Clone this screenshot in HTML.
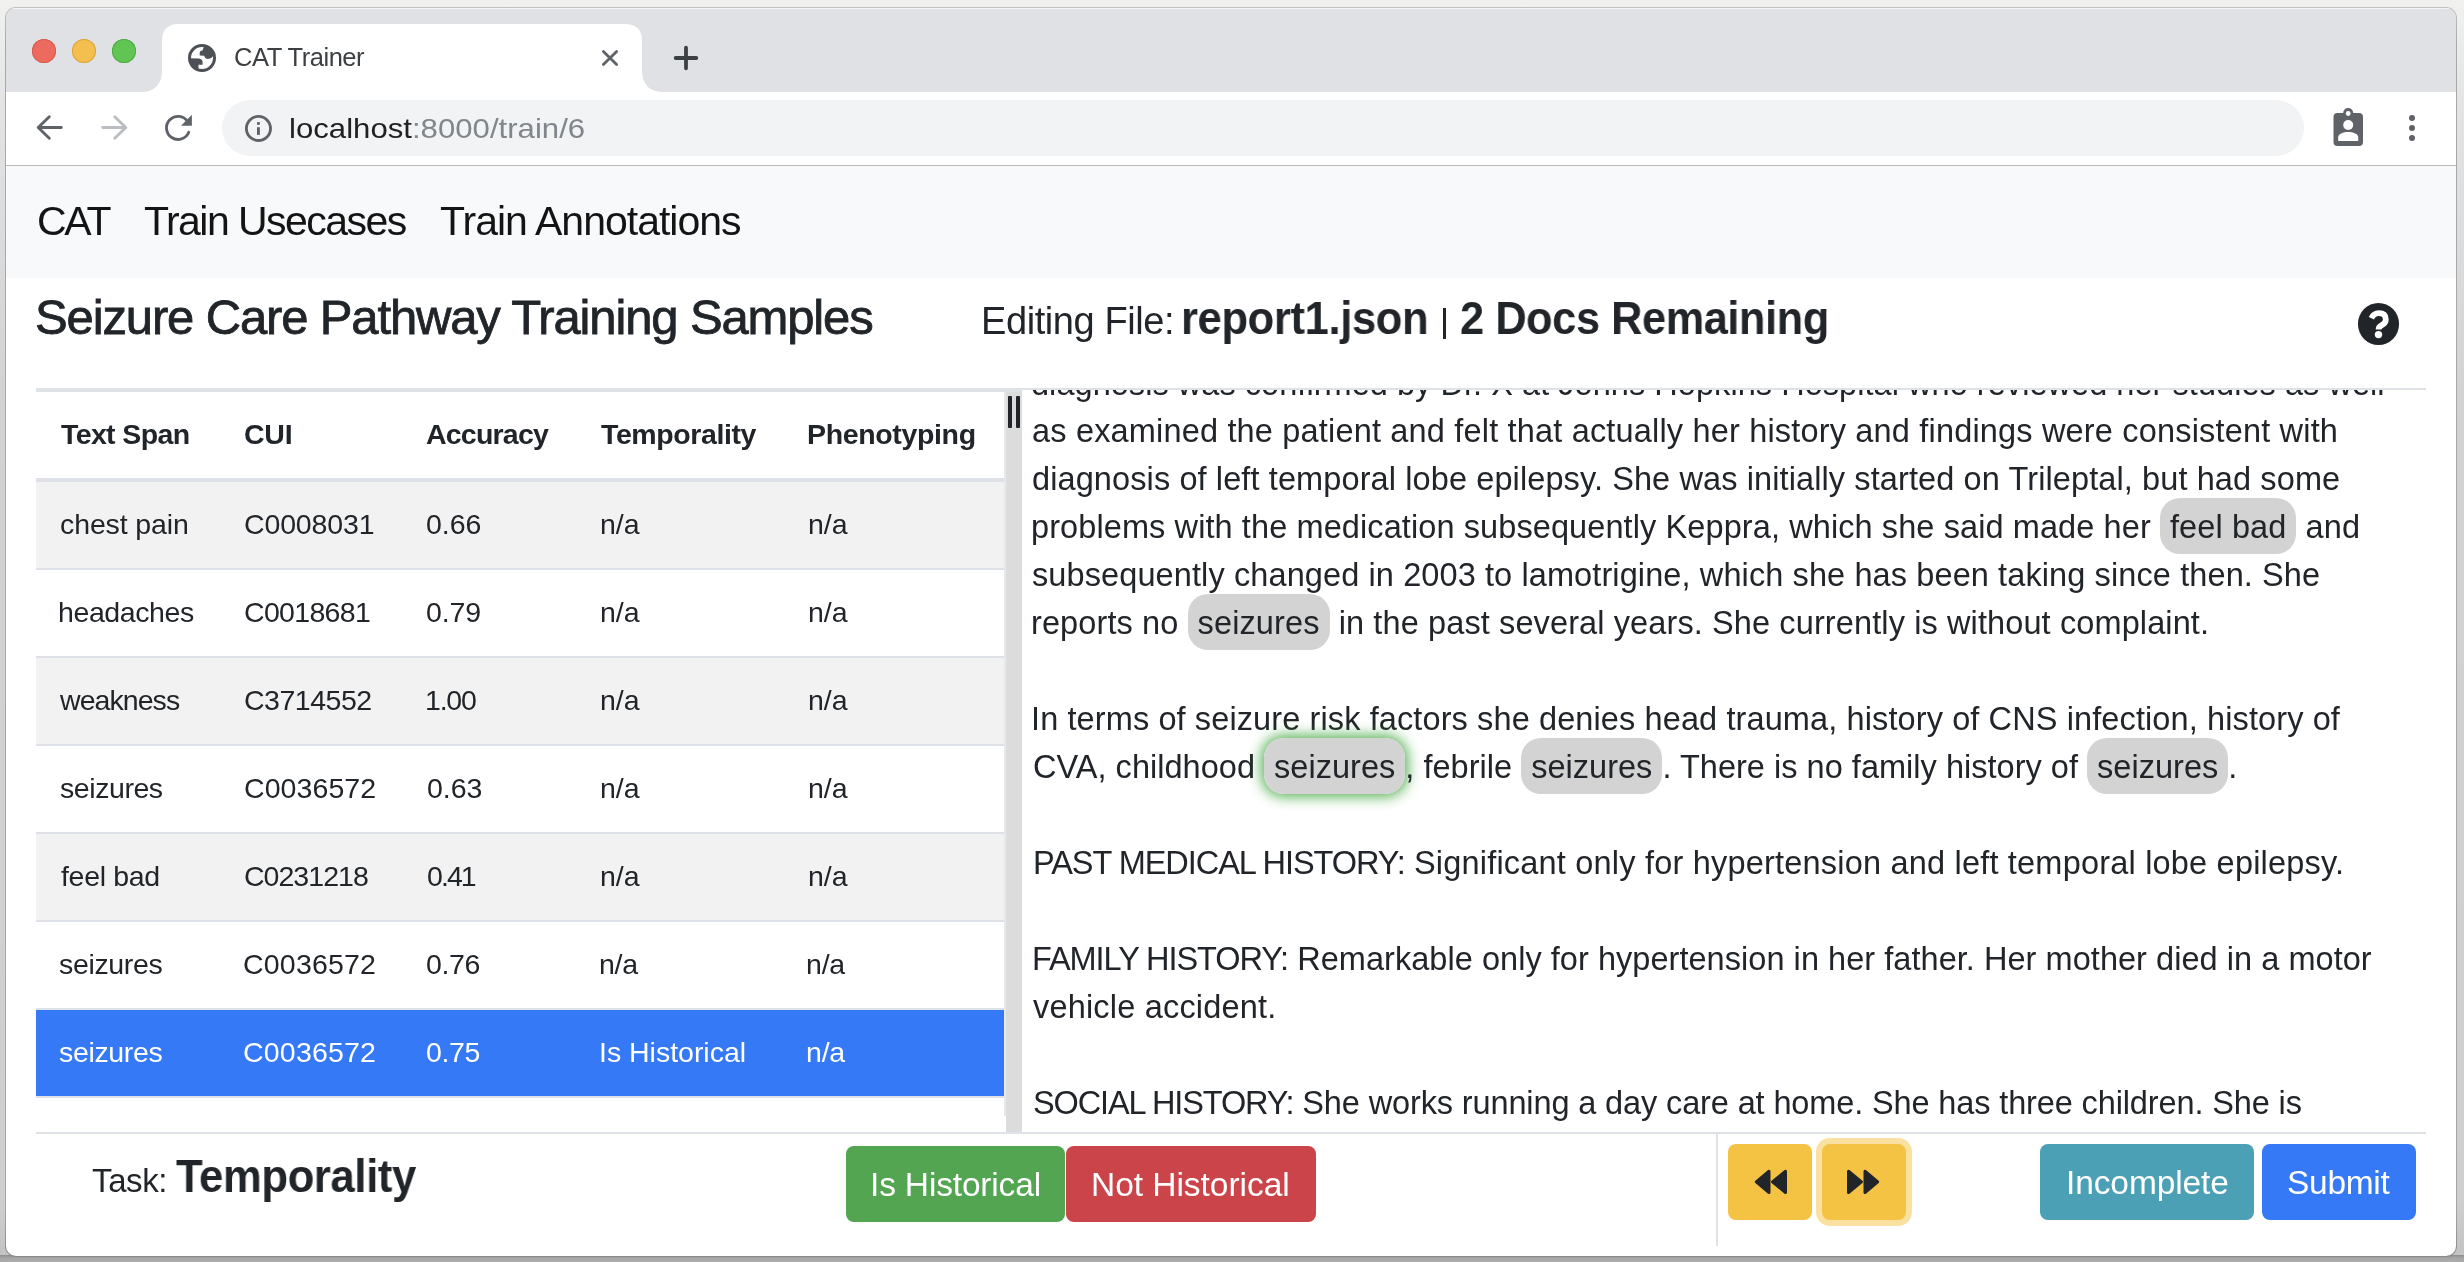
<!DOCTYPE html>
<html><head><meta charset="utf-8"><title>CAT Trainer</title>
<style>
html,body{margin:0;padding:0;width:2464px;height:1262px;overflow:hidden;background:#d0d0d0}
body{position:relative;font-family:"Liberation Sans",sans-serif;}
.t{position:absolute;line-height:1;white-space:nowrap;font-family:"Liberation Sans",sans-serif;will-change:transform}
.hl{background:#d3d3d3;border-radius:20px;padding:11px 10px 9px 10px}
</style></head><body>
<div style="position:absolute;left:0;top:0;width:2464px;height:1262px;background:linear-gradient(to bottom,#f1f1f0 0px,#e4e4e4 100px,#d2d2d2 400px,#cfcfcf 1200px,#c4c4c4 1250px)"></div>
<div style="position:absolute;left:0;top:1255px;width:2464px;height:7px;background:linear-gradient(to bottom,#8c8c8c 0px,#a6a6a6 3px,#acacac 7px)"></div>
<div style="position:absolute;left:5px;top:7px;width:2452px;height:1250px;border-radius:11px;background:linear-gradient(to bottom,#c0c0c0 0px,#a8a8a8 40px,#a5a5a5 1200px,#8a8a8a 1250px)"></div>
<div style="position:absolute;left:6px;top:8px;width:2450px;height:1248px;border-radius:10px;overflow:hidden;background:#fff">
<div style="position:absolute;left:0;top:0;width:2450px;height:84px;background:#dfe1e5;border-top:1px solid #f4f5f7;box-sizing:border-box"></div>
</div>
<div style="position:absolute;left:32px;top:39px;width:24px;height:24px;border-radius:50%;background:#ed6a5e;box-shadow:inset 0 0 0 1px #d65a4e"></div>
<div style="position:absolute;left:72px;top:39px;width:24px;height:24px;border-radius:50%;background:#f4bf4f;box-shadow:inset 0 0 0 1px #d9a33c"></div>
<div style="position:absolute;left:112px;top:39px;width:24px;height:24px;border-radius:50%;background:#61c554;box-shadow:inset 0 0 0 1px #4fa944"></div>
<svg style="position:absolute;left:140px;top:24px" width="524" height="68" viewBox="0 0 524 68">
<path d="M0 68 Q22 68 22 46 L22 17 Q22 0 39 0 L485 0 Q502 0 502 17 L502 46 Q502 68 524 68 Z" fill="#ffffff"/></svg>
<svg style="position:absolute;left:188px;top:44px" width="28" height="28" viewBox="0 0 28 28">
<defs><clipPath id="gclip"><circle cx="14" cy="14" r="12.4"/></clipPath></defs>
<circle cx="14" cy="14" r="12.4" fill="#fff"/>
<g clip-path="url(#gclip)" fill="#4d5156">
<path d="M16.6 0 L15.8 2.8 C15.2 4.5 14.6 6.3 14.6 6.3 C12.5 6.6 11.7 7.9 11.7 9 L11.7 11.6 L16.2 11.7 C16.6 13.6 17.8 14.9 20.2 14.9 C22.3 14.9 23.7 13.9 24.6 12.6 L28 10 L28 0 Z"/>
<path d="M0 14.3 L11 14.4 C13.4 14.6 14.6 16.2 14.6 18 L14.6 20.7 L10.5 20.8 L10.5 28 L0 28 Z"/>
</g>
<circle cx="14" cy="14" r="12.5" fill="none" stroke="#4d5156" stroke-width="3"/>
</svg>
<div id="tabtitle" class="t" style="left:234.00px;top:44.91px;font-size:25.5px;font-weight:400;color:#3c4043;letter-spacing:-0.450px;">CAT Trainer</div>
<svg style="position:absolute;left:600px;top:48px" width="20" height="20" viewBox="0 0 20 20"><path d="M3.4 3.4 L16.6 16.6 M16.6 3.4 L3.4 16.6" stroke="#5f6368" stroke-width="2.8" stroke-linecap="round"/></svg>
<svg style="position:absolute;left:673px;top:45px" width="26" height="26" viewBox="0 0 26 26"><path d="M13 2.7 L13 23.3 M2.7 13 L23.3 13" stroke="#3c4043" stroke-width="3.8" stroke-linecap="round"/></svg>
<div style="position:absolute;left:6px;top:92px;width:2450px;height:73px;background:#ffffff"></div>
<div style="position:absolute;left:6px;top:165px;width:2450px;height:1px;background:#b8b8b8"></div>
<svg style="position:absolute;left:34px;top:112px" width="32" height="32" viewBox="0 0 32 32"><path d="M27.3 15.5 L4.5 15.5 M15.3 4.7 L4.2 15.5 L15.3 26.3" stroke="#5f6368" stroke-width="2.9" fill="none" stroke-linecap="round" stroke-linejoin="round"/></svg>
<svg style="position:absolute;left:98px;top:112px" width="32" height="32" viewBox="0 0 32 32"><path d="M4.7 15.5 L27.5 15.5 M16.7 4.7 L27.8 15.5 L16.7 26.3" stroke="#babdc2" stroke-width="2.9" fill="none" stroke-linecap="round" stroke-linejoin="round"/></svg>
<svg style="position:absolute;left:162px;top:112px" width="32" height="32" viewBox="0 0 32 32"><path d="M26.75 20.23 A11.55 11.55 0 1 1 25.6 9.4" stroke="#5f6368" stroke-width="2.9" fill="none" stroke-linecap="round"/><path d="M29.9 2.8 L29.9 13.7 L19.0 13.7 Z" fill="#5f6368"/></svg>
<div style="position:absolute;left:222px;top:100px;width:2082px;height:56px;background:#f1f3f4;border-radius:28px"></div>
<svg style="position:absolute;left:244px;top:114px" width="28" height="28" viewBox="0 0 28 28"><circle cx="14.45" cy="14.45" r="12.07" stroke="#5f6368" stroke-width="2.85" fill="none"/><rect x="13.0" y="13.2" width="2.85" height="7.7" fill="#5f6368"/><rect x="13.0" y="8.1" width="2.85" height="2.7" fill="#5f6368"/></svg>
<div id="url" class="t" style="left:289.00px;top:113.87px;font-size:28.5px;font-weight:400;color:#202124;letter-spacing:0.000px;transform:scaleX(1.0931);transform-origin:0 0;">localhost<span style="color:#80868b">:8000/train/6</span></div>
<svg style="position:absolute;left:2332px;top:106px" width="32" height="42" viewBox="0 0 32 42">
<rect x="1.5" y="7" width="29.5" height="33" rx="4" fill="#5f6368"/><circle cx="16.2" cy="7" r="5" fill="#5f6368"/><circle cx="16.2" cy="7.5" r="2.4" fill="#fff"/>
<circle cx="16.2" cy="19" r="5" fill="#fff"/><path d="M6.2 35 L26.2 35 L26.2 31 C26.2 28 21 26 16.2 26 C11.4 26 6.2 28 6.2 31 Z" fill="#fff"/></svg>
<div style="position:absolute;left:2409px;top:115px;width:6px;height:6px;border-radius:50%;background:#5f6368"></div>
<div style="position:absolute;left:2409px;top:125px;width:6px;height:6px;border-radius:50%;background:#5f6368"></div>
<div style="position:absolute;left:2409px;top:135px;width:6px;height:6px;border-radius:50%;background:#5f6368"></div>
<div style="position:absolute;left:6px;top:166px;width:2450px;height:112px;background:#f8f9fa"></div>
<div id="nav1" class="t" style="left:37.00px;top:201.29px;font-size:41px;font-weight:400;color:rgba(0,0,0,.92);letter-spacing:-2.250px;">CAT</div>
<div id="nav2" class="t" style="left:144.00px;top:201.29px;font-size:41px;font-weight:400;color:rgba(0,0,0,.92);letter-spacing:-1.538px;">Train Usecases</div>
<div id="nav3" class="t" style="left:439.50px;top:201.29px;font-size:41px;font-weight:400;color:rgba(0,0,0,.92);letter-spacing:-1.000px;">Train Annotations</div>
<div id="title" class="t" style="left:34.50px;top:292.52px;font-size:49px;font-weight:400;color:#212529;letter-spacing:-1.139px;-webkit-text-stroke:0.8px #212529;">Seizure Care Pathway Training Samples</div>
<div id="edit1" class="t" style="left:981.00px;top:302.33px;font-size:38px;font-weight:400;color:#212529;letter-spacing:-0.417px;">Editing File:</div>
<div id="edit2" class="t" style="left:1181.00px;top:295.98px;font-size:45.5px;font-weight:700;color:#212529;letter-spacing:-0.400px;transform:scaleX(0.9579);transform-origin:0 0;">report1.json</div>
<div id="edit3" style="position:absolute;left:1442.5px;top:307.5px;width:3.0px;height:31.5px;background:#212529"></div>
<div id="edit4" class="t" style="left:1460.00px;top:295.98px;font-size:45.5px;font-weight:700;color:#212529;letter-spacing:-0.400px;transform:scaleX(0.9505);transform-origin:0 0;">2 Docs Remaining</div>
<div style="position:absolute;left:2358px;top:303.2px;width:41.40000000000009px;height:41.400000000000034px;border-radius:50%;background:#212529"></div>
<svg style="position:absolute;left:2358px;top:303px" width="42" height="42" viewBox="0 0 42 42">
<path d="M13.4 15.2 Q15.8 10.2 20.7 10.2 Q27.8 10.2 27.8 16.4 Q27.8 20 24.2 21.8 Q20.6 23.6 20.6 26.4" stroke="#fff" stroke-width="5.8" fill="none"/>
<circle cx="20.5" cy="31.6" r="3.7" fill="#fff"/></svg>
<div style="position:absolute;left:36px;top:388px;width:986px;height:4px;background:#dee2e6"></div>
<div id="h0" class="t" style="left:61.00px;top:420.37px;font-size:28.5px;font-weight:700;color:#212529;letter-spacing:-0.625px;">Text Span</div>
<div id="h1" class="t" style="left:243.50px;top:420.37px;font-size:28.5px;font-weight:700;color:#212529;letter-spacing:-0.250px;">CUI</div>
<div id="h2" class="t" style="left:425.50px;top:420.37px;font-size:28.5px;font-weight:700;color:#212529;letter-spacing:-0.786px;">Accuracy</div>
<div id="h3" class="t" style="left:601.00px;top:420.37px;font-size:28.5px;font-weight:700;color:#212529;letter-spacing:-0.400px;">Temporality</div>
<div id="h4" class="t" style="left:807.00px;top:420.37px;font-size:28.5px;font-weight:700;color:#212529;letter-spacing:-0.350px;">Phenotyping</div>
<div style="position:absolute;left:36px;top:478px;width:968px;height:4px;background:#dee2e6"></div>
<div style="position:absolute;left:36px;top:482px;width:968px;height:86px;background:#f2f2f2"></div>
<div style="position:absolute;left:36px;top:568px;width:968px;height:2px;background:#dee2e6"></div>
<div id="c00" class="t" style="left:60.00px;top:510.37px;font-size:28.5px;font-weight:400;color:#212529;letter-spacing:-0.111px;">chest pain</div>
<div id="c01" class="t" style="left:244.00px;top:510.37px;font-size:28.5px;font-weight:400;color:#212529;letter-spacing:-0.143px;">C0008031</div>
<div id="c02" class="t" style="left:426.00px;top:510.37px;font-size:28.5px;font-weight:400;color:#212529;letter-spacing:0.000px;">0.66</div>
<div id="c03" class="t" style="left:600.00px;top:510.37px;font-size:28.5px;font-weight:400;color:#212529;letter-spacing:0.000px;">n/a</div>
<div id="c04" class="t" style="left:808.00px;top:510.37px;font-size:28.5px;font-weight:400;color:#212529;letter-spacing:0.000px;">n/a</div>
<div style="position:absolute;left:36px;top:570px;width:968px;height:86px;background:#ffffff"></div>
<div style="position:absolute;left:36px;top:656px;width:968px;height:2px;background:#dee2e6"></div>
<div id="c10" class="t" style="left:58.20px;top:598.37px;font-size:28.5px;font-weight:400;color:#212529;letter-spacing:-0.400px;">headaches</div>
<div id="c11" class="t" style="left:243.60px;top:598.37px;font-size:28.5px;font-weight:400;color:#212529;letter-spacing:-0.686px;">C0018681</div>
<div id="c12" class="t" style="left:425.60px;top:598.37px;font-size:28.5px;font-weight:400;color:#212529;letter-spacing:-0.133px;">0.79</div>
<div id="c13" class="t" style="left:600.00px;top:598.37px;font-size:28.5px;font-weight:400;color:#212529;letter-spacing:0.000px;">n/a</div>
<div id="c14" class="t" style="left:808.00px;top:598.37px;font-size:28.5px;font-weight:400;color:#212529;letter-spacing:0.000px;">n/a</div>
<div style="position:absolute;left:36px;top:658px;width:968px;height:86px;background:#f2f2f2"></div>
<div style="position:absolute;left:36px;top:744px;width:968px;height:2px;background:#dee2e6"></div>
<div id="c20" class="t" style="left:60.20px;top:686.37px;font-size:28.5px;font-weight:400;color:#212529;letter-spacing:-0.943px;">weakness</div>
<div id="c21" class="t" style="left:243.60px;top:686.37px;font-size:28.5px;font-weight:400;color:#212529;letter-spacing:-0.486px;">C3714552</div>
<div id="c22" class="t" style="left:424.60px;top:686.37px;font-size:28.5px;font-weight:400;color:#212529;letter-spacing:-1.200px;">1.00</div>
<div id="c23" class="t" style="left:600.00px;top:686.37px;font-size:28.5px;font-weight:400;color:#212529;letter-spacing:0.000px;">n/a</div>
<div id="c24" class="t" style="left:808.00px;top:686.37px;font-size:28.5px;font-weight:400;color:#212529;letter-spacing:0.000px;">n/a</div>
<div style="position:absolute;left:36px;top:746px;width:968px;height:86px;background:#ffffff"></div>
<div style="position:absolute;left:36px;top:832px;width:968px;height:2px;background:#dee2e6"></div>
<div id="c30" class="t" style="left:59.60px;top:774.37px;font-size:28.5px;font-weight:400;color:#212529;letter-spacing:-0.429px;">seizures</div>
<div id="c31" class="t" style="left:244.20px;top:774.37px;font-size:28.5px;font-weight:400;color:#212529;letter-spacing:0.086px;">C0036572</div>
<div id="c32" class="t" style="left:426.60px;top:774.37px;font-size:28.5px;font-weight:400;color:#212529;letter-spacing:-0.067px;">0.63</div>
<div id="c33" class="t" style="left:600.00px;top:774.37px;font-size:28.5px;font-weight:400;color:#212529;letter-spacing:0.000px;">n/a</div>
<div id="c34" class="t" style="left:808.00px;top:774.37px;font-size:28.5px;font-weight:400;color:#212529;letter-spacing:0.000px;">n/a</div>
<div style="position:absolute;left:36px;top:834px;width:968px;height:86px;background:#f2f2f2"></div>
<div style="position:absolute;left:36px;top:920px;width:968px;height:2px;background:#dee2e6"></div>
<div id="c40" class="t" style="left:60.60px;top:862.37px;font-size:28.5px;font-weight:400;color:#212529;letter-spacing:-0.314px;">feel bad</div>
<div id="c41" class="t" style="left:244.20px;top:862.37px;font-size:28.5px;font-weight:400;color:#212529;letter-spacing:-0.971px;">C0231218</div>
<div id="c42" class="t" style="left:426.60px;top:862.37px;font-size:28.5px;font-weight:400;color:#212529;letter-spacing:-1.933px;">0.41</div>
<div id="c43" class="t" style="left:600.00px;top:862.37px;font-size:28.5px;font-weight:400;color:#212529;letter-spacing:0.000px;">n/a</div>
<div id="c44" class="t" style="left:808.00px;top:862.37px;font-size:28.5px;font-weight:400;color:#212529;letter-spacing:0.000px;">n/a</div>
<div style="position:absolute;left:36px;top:922px;width:968px;height:86px;background:#ffffff"></div>
<div style="position:absolute;left:36px;top:1008px;width:968px;height:2px;background:#dee2e6"></div>
<div id="c50" class="t" style="left:59.40px;top:950.37px;font-size:28.5px;font-weight:400;color:#212529;letter-spacing:-0.343px;">seizures</div>
<div id="c51" class="t" style="left:243.00px;top:950.37px;font-size:28.5px;font-weight:400;color:#212529;letter-spacing:0.200px;">C0036572</div>
<div id="c52" class="t" style="left:426.00px;top:950.37px;font-size:28.5px;font-weight:400;color:#212529;letter-spacing:-0.333px;">0.76</div>
<div id="c53" class="t" style="left:598.60px;top:950.37px;font-size:28.5px;font-weight:400;color:#212529;letter-spacing:-0.300px;">n/a</div>
<div id="c54" class="t" style="left:806.40px;top:950.37px;font-size:28.5px;font-weight:400;color:#212529;letter-spacing:-0.200px;">n/a</div>
<div style="position:absolute;left:36px;top:1010px;width:968px;height:86px;background:#3579f6"></div>
<div style="position:absolute;left:36px;top:1096px;width:968px;height:2px;background:#dee2e6"></div>
<div id="c60" class="t" style="left:59.40px;top:1038.37px;font-size:28.5px;font-weight:400;color:#ffffff;letter-spacing:-0.343px;">seizures</div>
<div id="c61" class="t" style="left:243.00px;top:1038.37px;font-size:28.5px;font-weight:400;color:#ffffff;letter-spacing:0.200px;">C0036572</div>
<div id="c62" class="t" style="left:426.00px;top:1038.37px;font-size:28.5px;font-weight:400;color:#ffffff;letter-spacing:-0.333px;">0.75</div>
<div id="c63" class="t" style="left:598.60px;top:1038.37px;font-size:28.5px;font-weight:400;color:#ffffff;letter-spacing:-0.017px;">Is Historical</div>
<div id="c64" class="t" style="left:806.40px;top:1038.37px;font-size:28.5px;font-weight:400;color:#ffffff;letter-spacing:-0.200px;">n/a</div>
<div style="position:absolute;left:1004px;top:392px;width:2px;height:724px;background:#e6e8eb"></div>
<div style="position:absolute;left:1006px;top:392px;width:16px;height:740px;background:#dcdcdc"></div>
<div style="position:absolute;left:1008px;top:396px;width:4px;height:32px;background:#212529;border-radius:1px"></div>
<div style="position:absolute;left:1016px;top:396px;width:4px;height:32px;background:#212529;border-radius:1px"></div>
<div style="position:absolute;left:1022px;top:388px;width:1404px;height:2px;background:#dee2e6"></div>
<div style="position:absolute;left:1022px;top:390px;width:1404px;height:742px;overflow:hidden">
<div id="L0" class="t" style="left:9.00px;top:-22.51px;font-size:32.5px;color:#212529;letter-spacing:0.046px">diagnosis was confirmed by Dr. X at Johns Hopkins Hospital who reviewed her studies as well</div>
<div id="L1" class="t" style="left:10.00px;top:25.49px;font-size:32.5px;color:#212529;letter-spacing:0.176px">as examined the patient and felt that actually her history and findings were consistent with</div>
<div id="L2" class="t" style="left:10.00px;top:73.49px;font-size:32.5px;color:#212529;letter-spacing:0.106px">diagnosis of left temporal lobe epilepsy. She was initially started on Trileptal, but had some</div>
<div id="L3" class="t" style="left:9.00px;top:121.49px;font-size:32.5px;color:#212529;letter-spacing:0.096px">problems with the medication subsequently Keppra, which she said made her <span class="hl">feel bad</span> and</div>
<div id="L4" class="t" style="left:10.00px;top:169.49px;font-size:32.5px;color:#212529;letter-spacing:0.105px">subsequently changed in 2003 to lamotrigine, which she has been taking since then. She</div>
<div id="L5" class="t" style="left:9.00px;top:217.49px;font-size:32.5px;color:#212529;letter-spacing:0.113px">reports no <span class="hl">seizures</span> in the past several years. She currently is without complaint.</div>
<div id="L6" class="t" style="left:9.00px;top:313.49px;font-size:32.5px;color:#212529;letter-spacing:0.110px">In terms of seizure risk factors she denies head trauma, history of CNS infection, history of</div>
<div id="L7" class="t" style="left:10.50px;top:361.49px;font-size:32.5px;color:#212529;letter-spacing:0.026px">CVA, childhood <span class="hl" style="box-shadow:0 0 13px 3px rgba(60,165,60,.85)">seizures</span>, febrile <span class="hl">seizures</span>. There is no family history of <span class="hl">seizures</span>.</div>
<div id="L8" class="t" style="left:10.60px;top:457.49px;font-size:32.5px;color:#212529;letter-spacing:0.200px"><span id="P8" style="letter-spacing:-1.050px">PAST MEDICAL HISTORY:</span> Significant only for hypertension and left temporal lobe epilepsy.</div>
<div id="L9" class="t" style="left:10.00px;top:553.49px;font-size:32.5px;color:#212529;letter-spacing:0.045px"><span id="P9" style="letter-spacing:-1.071px">FAMILY HISTORY:</span> Remarkable only for hypertension in her father. Her mother died in a motor</div>
<div id="L10" class="t" style="left:10.50px;top:601.49px;font-size:32.5px;color:#212529;letter-spacing:0.187px">vehicle accident.</div>
<div id="L11" class="t" style="left:10.50px;top:697.49px;font-size:32.5px;color:#212529;letter-spacing:-0.127px"><span id="P11" style="letter-spacing:-1.143px">SOCIAL HISTORY:</span> She works running a day care at home. She has three children. She is</div>
</div>
<div style="position:absolute;left:36px;top:1132px;width:2390px;height:2px;background:#dee2e6"></div>
<div id="task1" class="t" style="left:92.00px;top:1163.57px;font-size:33px;font-weight:400;color:#212529;letter-spacing:-0.375px;">Task:</div>
<div id="task2" class="t" style="left:176.00px;top:1152.56px;font-size:46px;font-weight:700;color:#212529;letter-spacing:-0.400px;transform:scaleX(0.9487);transform-origin:0 0;">Temporality</div>
<div id="bIs" style="position:absolute;left:846px;top:1146px;width:219px;height:76px;background:#53a551;border-radius:8px"></div>
<div id="bNot" style="position:absolute;left:1066px;top:1146px;width:250px;height:76px;background:#cb444a;border-radius:8px"></div>
<div id="btxt1" class="t" style="left:870.00px;top:1168.14px;font-size:33.5px;font-weight:400;color:#ffffff;letter-spacing:-0.167px;">Is Historical</div>
<div id="btxt2" class="t" style="left:1091.00px;top:1168.14px;font-size:33.5px;font-weight:400;color:#ffffff;letter-spacing:-0.038px;">Not Historical</div>
<div style="position:absolute;left:1716px;top:1134px;width:2px;height:112px;background:#dee2e6"></div>
<div style="position:absolute;left:1728px;top:1144px;width:84px;height:76px;background:#f5c344;border-radius:8px"></div>
<div style="position:absolute;left:1822px;top:1144px;width:84px;height:76px;background:#f5c344;border-radius:8px;box-shadow:0 0 0 6px rgba(245,195,68,.5)"></div>
<svg style="position:absolute;left:1754px;top:1168px" width="34" height="28" viewBox="0 0 34 28">
<path d="M15 3.2 L2.3 13.85 L15 24.5 Z M31.5 3.2 L18.5 13.85 L31.5 24.5 Z" fill="#212529" stroke="#212529" stroke-width="3" stroke-linejoin="round"/></svg>
<svg style="position:absolute;left:1846px;top:1168px" width="34" height="28" viewBox="0 0 34 28">
<path d="M2.5 3.2 L15.5 13.85 L2.5 24.5 Z M19 3.2 L31.7 13.85 L19 24.5 Z" fill="#212529" stroke="#212529" stroke-width="3" stroke-linejoin="round"/></svg>
<div style="position:absolute;left:2040px;top:1144px;width:214px;height:76px;background:#4ba0b5;border-radius:8px"></div>
<div style="position:absolute;left:2262px;top:1144px;width:154px;height:76px;background:#3579f6;border-radius:8px"></div>
<div id="btxt3" class="t" style="left:2065.50px;top:1166.14px;font-size:33.5px;font-weight:400;color:#ffffff;letter-spacing:-0.111px;">Incomplete</div>
<div id="btxt4" class="t" style="left:2286.50px;top:1166.14px;font-size:33.5px;font-weight:400;color:#ffffff;letter-spacing:-0.300px;">Submit</div>
</body></html>
